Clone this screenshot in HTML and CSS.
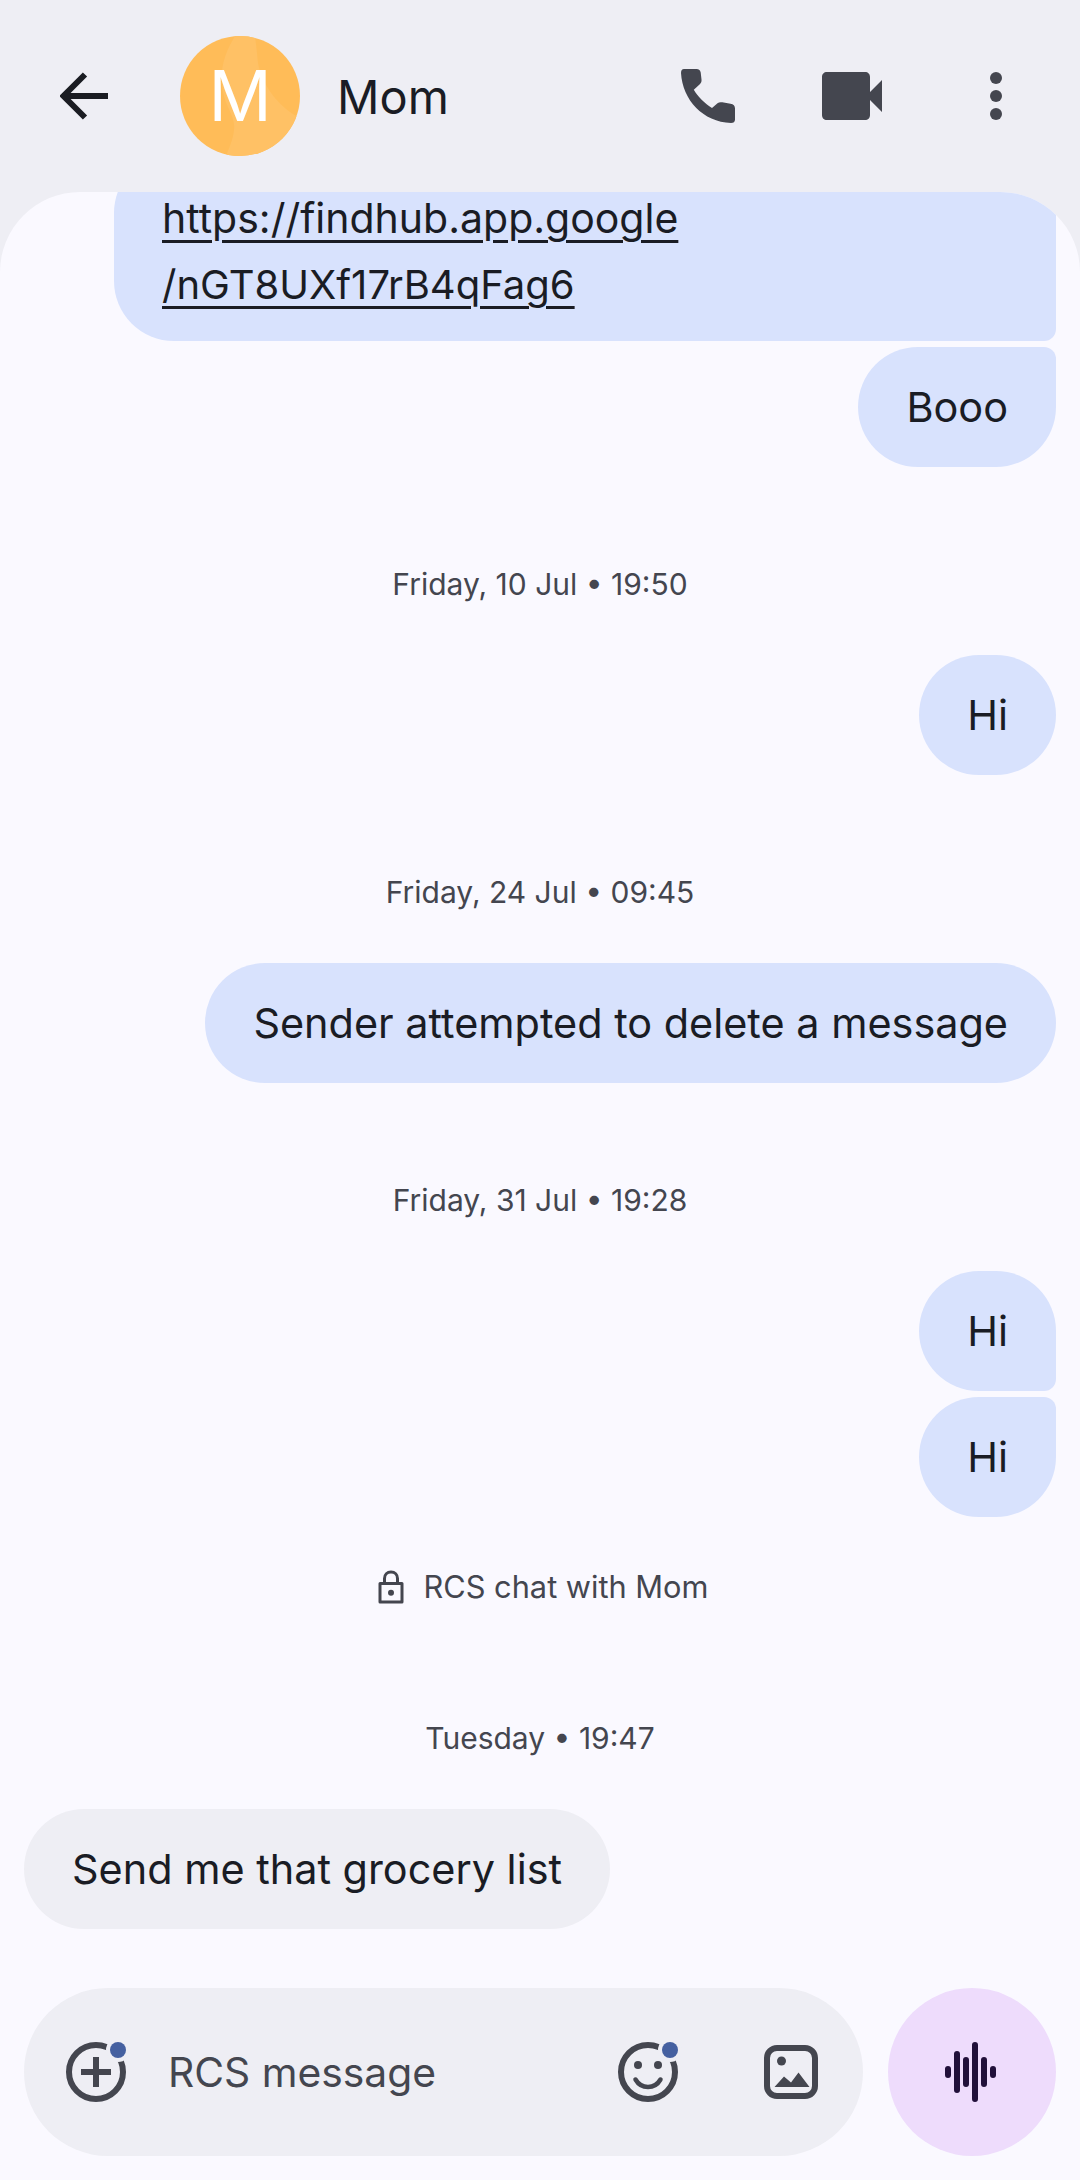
FILE: index.html
```html
<!DOCTYPE html>
<html lang="en">
<head>
<meta charset="utf-8">
<title>Mom</title>
<link rel="stylesheet" href="styles.css">
</head>
<body>
<div class="screen">
  <header class="topbar">
    <svg class="icon-back" viewBox="0 0 48 48"><path d="M48 24H6M25 2.500 3.500 24 25 45.500" fill="none" stroke="#1a1c22" stroke-width="6"/></svg>
    <div class="avatar">
      <svg class="avatar-art" viewBox="0 0 120 120"><rect width="120" height="120" fill="#ffbc58"/><path d="M55 0C46 15 40 30 42 50c2 20 14 30 12 44-1 10-5 18-8 26h74V82C100 72 82 50 78 27 77 15 76 8 75 0Z" fill="#ffc165"/></svg>
      <span class="avatar-letter">M</span>
    </div>
    <h1 class="title">Mom</h1>
    <svg class="icon-phone" viewBox="0 0 54 54"><path d="M3 0H15.500C18 0 19.300 1.300 19.700 3.500L20.500 10.500C20.800 12.800 20 14 18.800 15.200L12.800 20.800C16.500 27.500 24 34.500 31 39L36.500 34.200C38 33 39.500 33 41.300 33.300L49.500 34.700C52.500 35.300 54 36.800 54 39.500V50.500C54 53 52.500 54 50 54C22 53 1.500 31 0 4C0 1.500 1 0 3 0Z" fill="#44464f"/></svg>
    <svg class="icon-video" viewBox="0 0 60 48"><path d="M5 0H43C46 0 48 2 48 5V43C48 46 46 48 43 48H5C2 48 0 46 0 43V5C0 2 2 0 5 0ZM48 20 60 8V40L48 28Z" fill="#44464f"/></svg>
    <svg class="icon-more" viewBox="0 0 12 48"><circle cx="6" cy="6" r="6" fill="#44464f"/><circle cx="6" cy="24" r="6" fill="#44464f"/><circle cx="6" cy="42" r="6" fill="#44464f"/></svg>
  </header>

  <main class="panel">
    <section class="thread">
      <div class="bubble out link-bubble tail-bottom"><a class="link"><span class="link-host">https://findhub.app.google</span><br>/nGT8UXf17rB4qFag6</a></div>
      <div class="bubble out tail-top stack">Booo</div>

      <p class="stamp">Friday, 10 Jul • 19:50</p>
      <div class="bubble out">Hi</div>

      <p class="stamp">Friday, 24 Jul • 09:45</p>
      <div class="bubble out">Sender attempted to delete a message</div>

      <p class="stamp">Friday, 31 Jul • 19:28</p>
      <div class="bubble out tail-bottom">Hi</div>
      <div class="bubble out tail-top stack">Hi</div>

      <p class="notice">
        <svg class="icon-lock" viewBox="0 0 26 34"><path d="M2 13.500H24V32H2ZM6.500 13.500V8.500C6.500 4.500 9.200 2 13 2S19.500 4.500 19.500 8.500V13.500" fill="none" stroke="#44464f" stroke-width="3" stroke-linejoin="round"/><circle cx="13" cy="22.800" r="3" fill="#44464f"/></svg>
        RCS chat with Mom
      </p>

      <p class="stamp stamp-last">Tuesday • 19:47</p>
      <div class="bubble in">Send me that grocery list</div>
    </section>

    <footer class="dock">
      <div class="composer">
        <svg class="icon-slot" viewBox="0 0 72 72"><circle cx="36" cy="36" r="27" fill="none" stroke="#44464f" stroke-width="6"/><path d="M21 36H51M36 21V51" fill="none" stroke="#44464f" stroke-width="6"/><circle cx="58" cy="14" r="12" fill="#eeeef4"/><circle cx="58" cy="14" r="8" fill="#4560a0"/></svg>
        <span class="placeholder">RCS message</span>
        <svg class="icon-slot icon-emoji" viewBox="0 0 72 72"><circle cx="36" cy="36" r="27" fill="none" stroke="#44464f" stroke-width="6"/><circle cx="26" cy="29" r="4" fill="#44464f"/><circle cx="46" cy="29" r="4" fill="#44464f"/><path d="M23.500 43.500C27 49.500 31 51 36 51S45 49.500 48.500 43.500" fill="none" stroke="#44464f" stroke-width="4.500" stroke-linecap="round"/><circle cx="58" cy="14" r="12" fill="#eeeef4"/><circle cx="58" cy="14" r="8" fill="#4560a0"/></svg>
        <svg class="icon-slot" viewBox="0 0 72 72"><rect x="12" y="12" width="48" height="48" rx="10" fill="none" stroke="#44464f" stroke-width="6"/><circle cx="26.500" cy="25" r="4.500" fill="#44464f"/><path d="M19.500 51 29 40.500 36 46.500 43.500 36.500 54.500 51Z" fill="#44464f"/></svg>
      </div>
      <button class="mic" type="button" aria-label="Voice message">
        <svg class="icon-slot" viewBox="0 0 60 60"><path d="M6 27V33M15 12V48M24 18V42M33 3V57M42 18V42M51 27V33" fill="none" stroke="#21103a" stroke-width="6" stroke-linecap="round"/></svg>
      </button>
    </footer>
  </main>
</div>
</body>
</html>
```
FILE: styles.css
```css
* { box-sizing: border-box; }
html, body { margin: 0; padding: 0; }
body {
  width: 1080px;
  height: 2180px;
  overflow: hidden;
  background: #eeeef4;
  font-family: "Inter", "Roboto", "Liberation Sans", sans-serif;
  color: #1a1c24;
}
.screen { display: flex; flex-direction: column; height: 2180px; }

.topbar {
  flex: 0 0 192px;
  display: flex;
  align-items: center;
  padding: 0 0 0 60px;
}
.icon-back { width: 48px; height: 48px; margin-right: 72px; }
.avatar {
  position: relative;
  width: 120px;
  height: 120px;
  border-radius: 50%;
  overflow: hidden;
  display: flex;
  align-items: center;
  justify-content: center;
  margin-right: 37px;
}
.avatar-art { position: absolute; inset: 0; width: 120px; height: 120px; }
.avatar-letter { position: relative; color: #fff; font-size: 70px; line-height: 1; font-weight: 400; }
.title { margin: 0; flex: 1; font-size: 47px; font-weight: 400; color: #1a1c24; }
.icon-phone { width: 54px; height: 54px; margin-right: 87px; }
.icon-video { width: 60px; height: 48px; margin-right: 108px; }
.icon-more { width: 12px; height: 48px; margin-right: 78px; }

.panel {
  flex: 1;
  min-height: 0;
  display: flex;
  flex-direction: column;
  padding: 0 24px 24px;
  background: #faf9ff;
  border-radius: 80px 80px 0 0;
  overflow: hidden;
}
.thread {
  flex: 1;
  min-height: 0;
  display: flex;
  flex-direction: column;
  justify-content: flex-end;
  align-items: flex-end;
  padding-bottom: 59px;
}
.bubble {
  flex: none;
  height: 120px;
  padding: 0 48px;
  border-radius: 60px;
  display: flex;
  align-items: center;
  font-size: 41.4px;
  line-height: 56px;
  white-space: nowrap;
}
.out { background: #d8e2fd; }
.in { background: #eeeef4; align-self: flex-start; }
.tail-bottom { border-bottom-right-radius: 12px; }
.tail-top { border-top-right-radius: 12px; }
.stack { margin-top: 6px; }
.link-bubble {
  width: 942px;
  height: auto;
  align-items: flex-start;
  padding: 32px 48px 23px;
  font-size: 40px;
}
.link { line-height: 66px; text-decoration: underline; text-decoration-thickness: 3px; text-underline-offset: 7px; }
.link-host { font-size: 41px; }

.stamp, .notice {
  align-self: stretch;
  margin: 97px 0 51px;
  height: 40px;
  font-size: 30px;
  line-height: 40px;
  color: #44464f;
  text-align: center;
}
.notice {
  display: flex;
  align-items: center;
  justify-content: center;
  gap: 19px;
  margin: 50px 0 0;
  padding-left: 7px;
  font-size: 30.75px;
}
.stamp-last { margin-top: 111px; }
.icon-lock { width: 26px; height: 34px; }

.dock { flex: none; display: flex; gap: 25px; }
.composer {
  flex: 1;
  height: 168px;
  display: flex;
  align-items: center;
  padding: 0 36px;
  border-radius: 84px;
  background: #eeeef4;
}
.icon-slot { flex: none; width: 72px; height: 72px; }
.placeholder { flex: 1; margin-left: 36px; font-size: 40.8px; color: #44464f; }
.icon-emoji { margin-right: 71px; }
.mic {
  flex: none;
  width: 168px;
  height: 168px;
  padding: 0;
  border: 0;
  border-radius: 50%;
  background: #eedcfc;
  display: flex;
  align-items: center;
  justify-content: center;
}
.mic .icon-slot { width: 60px; height: 60px; }
```
